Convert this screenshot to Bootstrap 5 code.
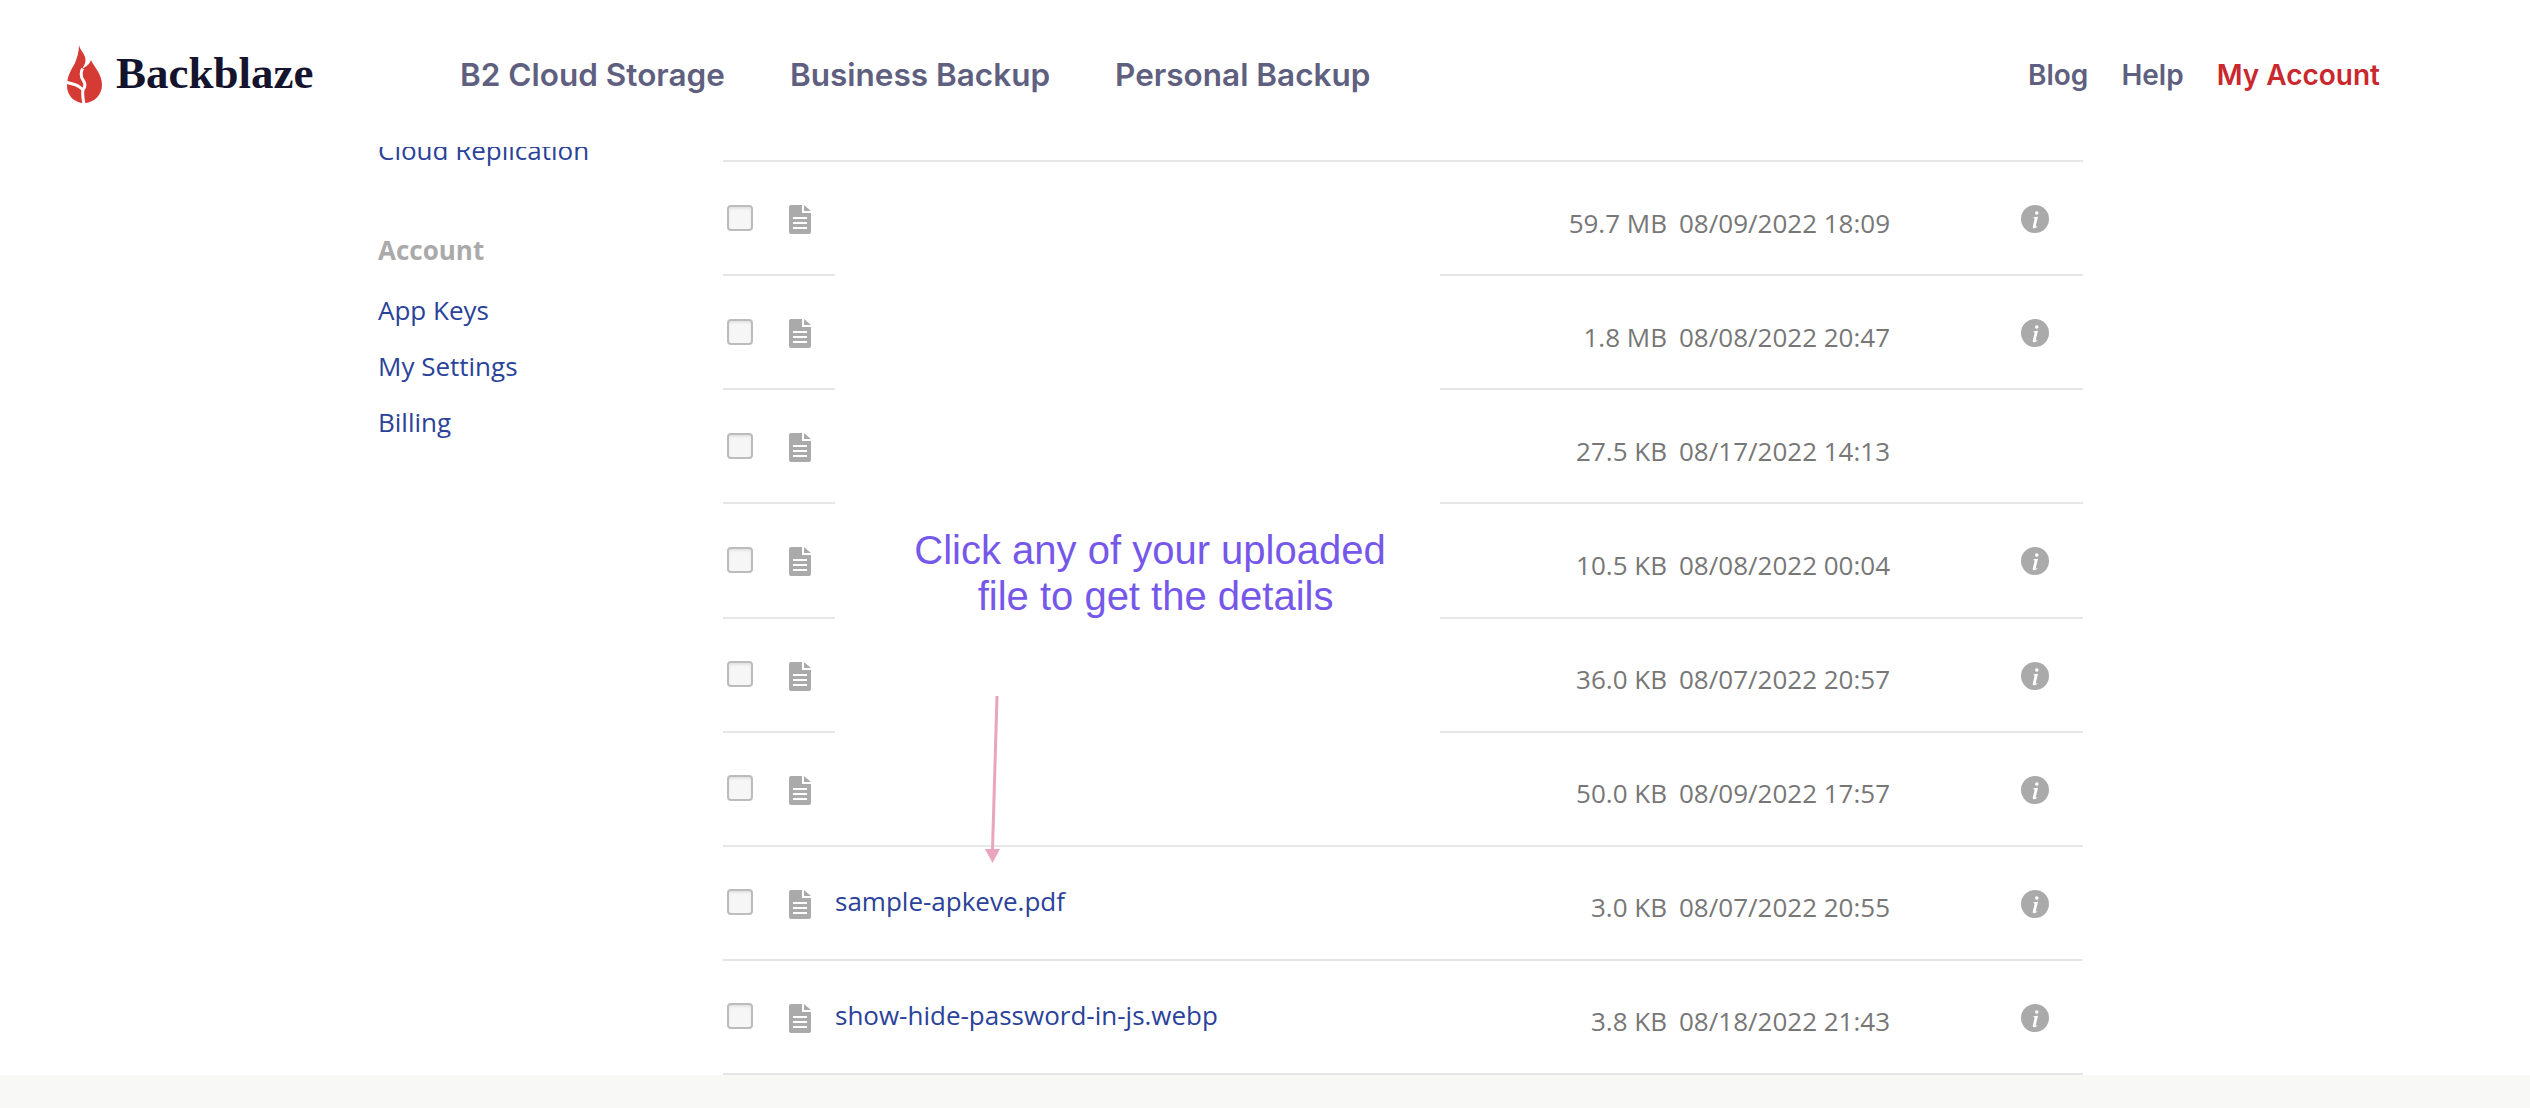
<!DOCTYPE html>
<html lang="en">
<head>
    <meta charset="UTF-8">
    <meta name="viewport" content="width=device-width, initial-scale=1.0">
    <title>Backblaze - Browse Files</title>
    <link href="https://cdn.jsdelivr.net/npm/bootstrap@5.3.0/dist/css/bootstrap.min.css" rel="stylesheet">
    <style>
        body {
            font-family: "Open Sans", sans-serif;
            background: #fff;
            overflow: hidden;
        }
        .bb-header { height: 147px; padding-left: 67px; padding-right: 150px; background: #fff; }
        .bb-logo { width: 393px; }
        .bb-logo-text { font-family: "Liberation Serif", serif; font-weight: 700; font-size: 45px; color: #14142f; margin-left: 14px; line-height: 1; }
        .bb-nav-main { gap: 65px; padding-top: 2px; }
        .bb-nav-main a { font-family: Inter, sans-serif; font-weight: 600; font-size: 31.5px; color: #5f5f80; text-decoration: none; }
        .bb-nav-side { gap: 33px; padding-top: 2px; }
        .bb-nav-side a { font-family: Inter, sans-serif; font-weight: 600; font-size: 28px; color: #5f5f80; text-decoration: none; }
        .bb-nav-side a.bb-account { color: #c8282e; }

        .bb-main { height: 928px; overflow: hidden; padding-left: 378px; position: relative; }
        .bb-side { width: 345px; font-size: 26px; }
        .bb-side a { display: block; color: #2a429a; text-decoration: none; height: 56px; line-height: 56px; }
        .bb-side-clip { margin-top: -25px; margin-bottom: 44px; }
        .bb-side-title { font-weight: 700; color: #aaa; height: 56px; line-height: 56px; margin-bottom: 4px; }

        .bb-files { width: 1360px; }
        .bb-rule { height: 15px; border-bottom: 2px solid #e6e6e6; }
        .bb-row { height: 114.125px; }
        .bb-cell-icons { width: 112px; padding-left: 4px; border-bottom: 2px solid #e6e6e6; }
        .bb-cell-name { width: 605px; border-bottom: 2px solid #fff; font-size: 26px; }
        .bb-cell-name a { color: #2a429a; text-decoration: none; margin-bottom: 2px; }
        .bb-row-open .bb-cell-name { border-bottom-color: #e6e6e6; }
        .bb-cell-meta { flex: 1; border-bottom: 2px solid #e6e6e6; font-size: 26px; color: #777; padding-top: 10px; }
        .bb-size { width: 227px; text-align: right; }
        .bb-date { width: 223px; margin-left: 12px; white-space: nowrap; }
        .bb-info-slot { width: 28px; margin-left: 119px; margin-top: -10px; }
        input.bb-check { width: 26px; height: 26px; margin: 0 36px 1px 0; border: 2px solid #bcbcbc; border-radius: 5px; background-color: #f6f6f6; box-shadow: inset 0 2px 2px #e4e4e4; }
        .bb-doc { width: 22px; height: 29px; margin-top: 3px; }
        .bb-info { width: 28px; height: 28px; margin-top: 2px; }

        .bb-note { position: absolute; left: 880px; top: 380px; width: 540px; font-family: "Liberation Sans", sans-serif; font-size: 40px; line-height: 46px; color: #7558ea; text-align: center; }
        .bb-arrow { position: absolute; left: 980px; top: 549px; width: 24px; height: 167px; }
        .bb-footer { height: 33px; background: #f8f8f6; }
    </style>
</head>
<body>
    <!-- Header -->
    <header class="bb-header d-flex align-items-center">
        <a class="bb-logo d-flex align-items-center text-decoration-none" href="#">
            <svg width="35" height="58" viewBox="0 0 35 58" aria-hidden="true">
                <path fill="#d63a35" d="M12 0C12.5 5 19 9 18.5 16C18 19.5 16.5 21 15.5 23.5C18 22 22.5 20 24 15C27 22 35 29 35 40C35 50 27 58 17 58C7 58 0 50 0 41C0 30 5 24 8 18C10 13 12 7 12 0Z"/>
                <path fill="none" stroke="#fff" stroke-width="3" d="M15.5 23.5C13.5 28 14 32 16 35C19 39 17.5 43 16 45C15 49 16 54 17 59"/>
                <path fill="none" stroke="#fff" stroke-width="3" d="M-1 37C4 39 8 39 11 41C14 43 15.5 44 16 45"/>
            </svg>
            <span class="bb-logo-text">Backblaze</span>
        </a>
        <nav class="bb-nav-main d-flex">
            <a href="#">B2 Cloud Storage</a>
            <a href="#">Business Backup</a>
            <a href="#">Personal Backup</a>
        </nav>
        <nav class="bb-nav-side d-flex ms-auto">
            <a href="#">Blog</a>
            <a href="#">Help</a>
            <a class="bb-account" href="#">My Account</a>
        </nav>
    </header>

    <!-- Sidebar and file list -->
    <main class="bb-main d-flex">
        <aside class="bb-side flex-shrink-0">
            <a class="bb-side-clip" href="#">Cloud Replication</a>
            <div class="bb-side-title">Account</div>
            <a href="#">App Keys</a>
            <a href="#">My Settings</a>
            <a href="#">Billing</a>
        </aside>
        <section class="bb-files flex-shrink-0" id="file-list">
            <div class="bb-rule"></div>
        </section>
        <div class="bb-note">Click any of your uploaded<br>&nbsp;file to get the details</div>
        <svg class="bb-arrow" viewBox="0 0 24 167" aria-hidden="true">
            <line x1="17" y1="0" x2="12.5" y2="154" stroke="#e8a5bd" stroke-width="3"/>
            <polygon points="5,153 20,153 12.5,167" fill="#e8a5bd"/>
        </svg>
    </main>

    <footer class="bb-footer"></footer>

    <script src="https://cdn.jsdelivr.net/npm/bootstrap@5.3.0/dist/js/bootstrap.bundle.min.js"></script>
    <script>
        const files = [
            { size: '59.7 MB', date: '08/09/2022 18:09', info: true },
            { size: '1.8 MB', date: '08/08/2022 20:47', info: true },
            { size: '27.5 KB', date: '08/17/2022 14:13', info: false },
            { size: '10.5 KB', date: '08/08/2022 00:04', info: true },
            { size: '36.0 KB', date: '08/07/2022 20:57', info: true },
            { size: '50.0 KB', date: '08/09/2022 17:57', info: true, open: true },
            { name: 'sample-apkeve.pdf', size: '3.0 KB', date: '08/07/2022 20:55', info: true, open: true },
            { name: 'show-hide-password-in-js.webp', size: '3.8 KB', date: '08/18/2022 21:43', info: true, open: true }
        ];

        const docIcon = `<svg class="bb-doc" viewBox="0 0 22 29" aria-hidden="true">
            <path fill="#aaa" d="M2 0h11v8h9v19a2 2 0 0 1-2 2H2a2 2 0 0 1-2-2V2a2 2 0 0 1 2-2z"/>
            <path fill="#aaa" d="M15 0l7 6h-7z"/>
            <path fill="#fff" d="M4 12h14v2H4zM4 17h14v2H4zM4 22h14v2H4z"/>
        </svg>`;

        const infoIcon = `<svg class="bb-info" viewBox="0 0 28 28" aria-hidden="true">
            <circle cx="14" cy="14" r="14" fill="#aaa"/>
            <circle cx="15.8" cy="8" r="1.8" fill="#fff"/>
            <path fill="#fff" d="M12.5 12.2l4.5-.4-2.3 9.5c-.1.5.4.6 1.4-.2l.3.4c-1.5 1.5-2.6 1.7-3.6 1.7-1 0-1.2-.7-1-1.7l1.8-7.5c.1-.6-.3-.8-1-.8z"/>
        </svg>`;

        document.getElementById('file-list').insertAdjacentHTML('beforeend', files.map(file => `
            <div class="bb-row d-flex align-items-stretch ${file.open ? 'bb-row-open' : ''}">
                <div class="bb-cell-icons d-flex align-items-center">
                    <input class="bb-check form-check-input" type="checkbox" aria-label="Select file">
                    ${docIcon}
                </div>
                <div class="bb-cell-name d-flex align-items-center">
                    ${file.name ? `<a href="#">${file.name}</a>` : ''}
                </div>
                <div class="bb-cell-meta d-flex align-items-center">
                    <span class="bb-size">${file.size}</span>
                    <span class="bb-date">${file.date}</span>
                    <span class="bb-info-slot d-flex">${file.info ? infoIcon : ''}</span>
                </div>
            </div>`).join(''));
    </script>
</body>
</html>
